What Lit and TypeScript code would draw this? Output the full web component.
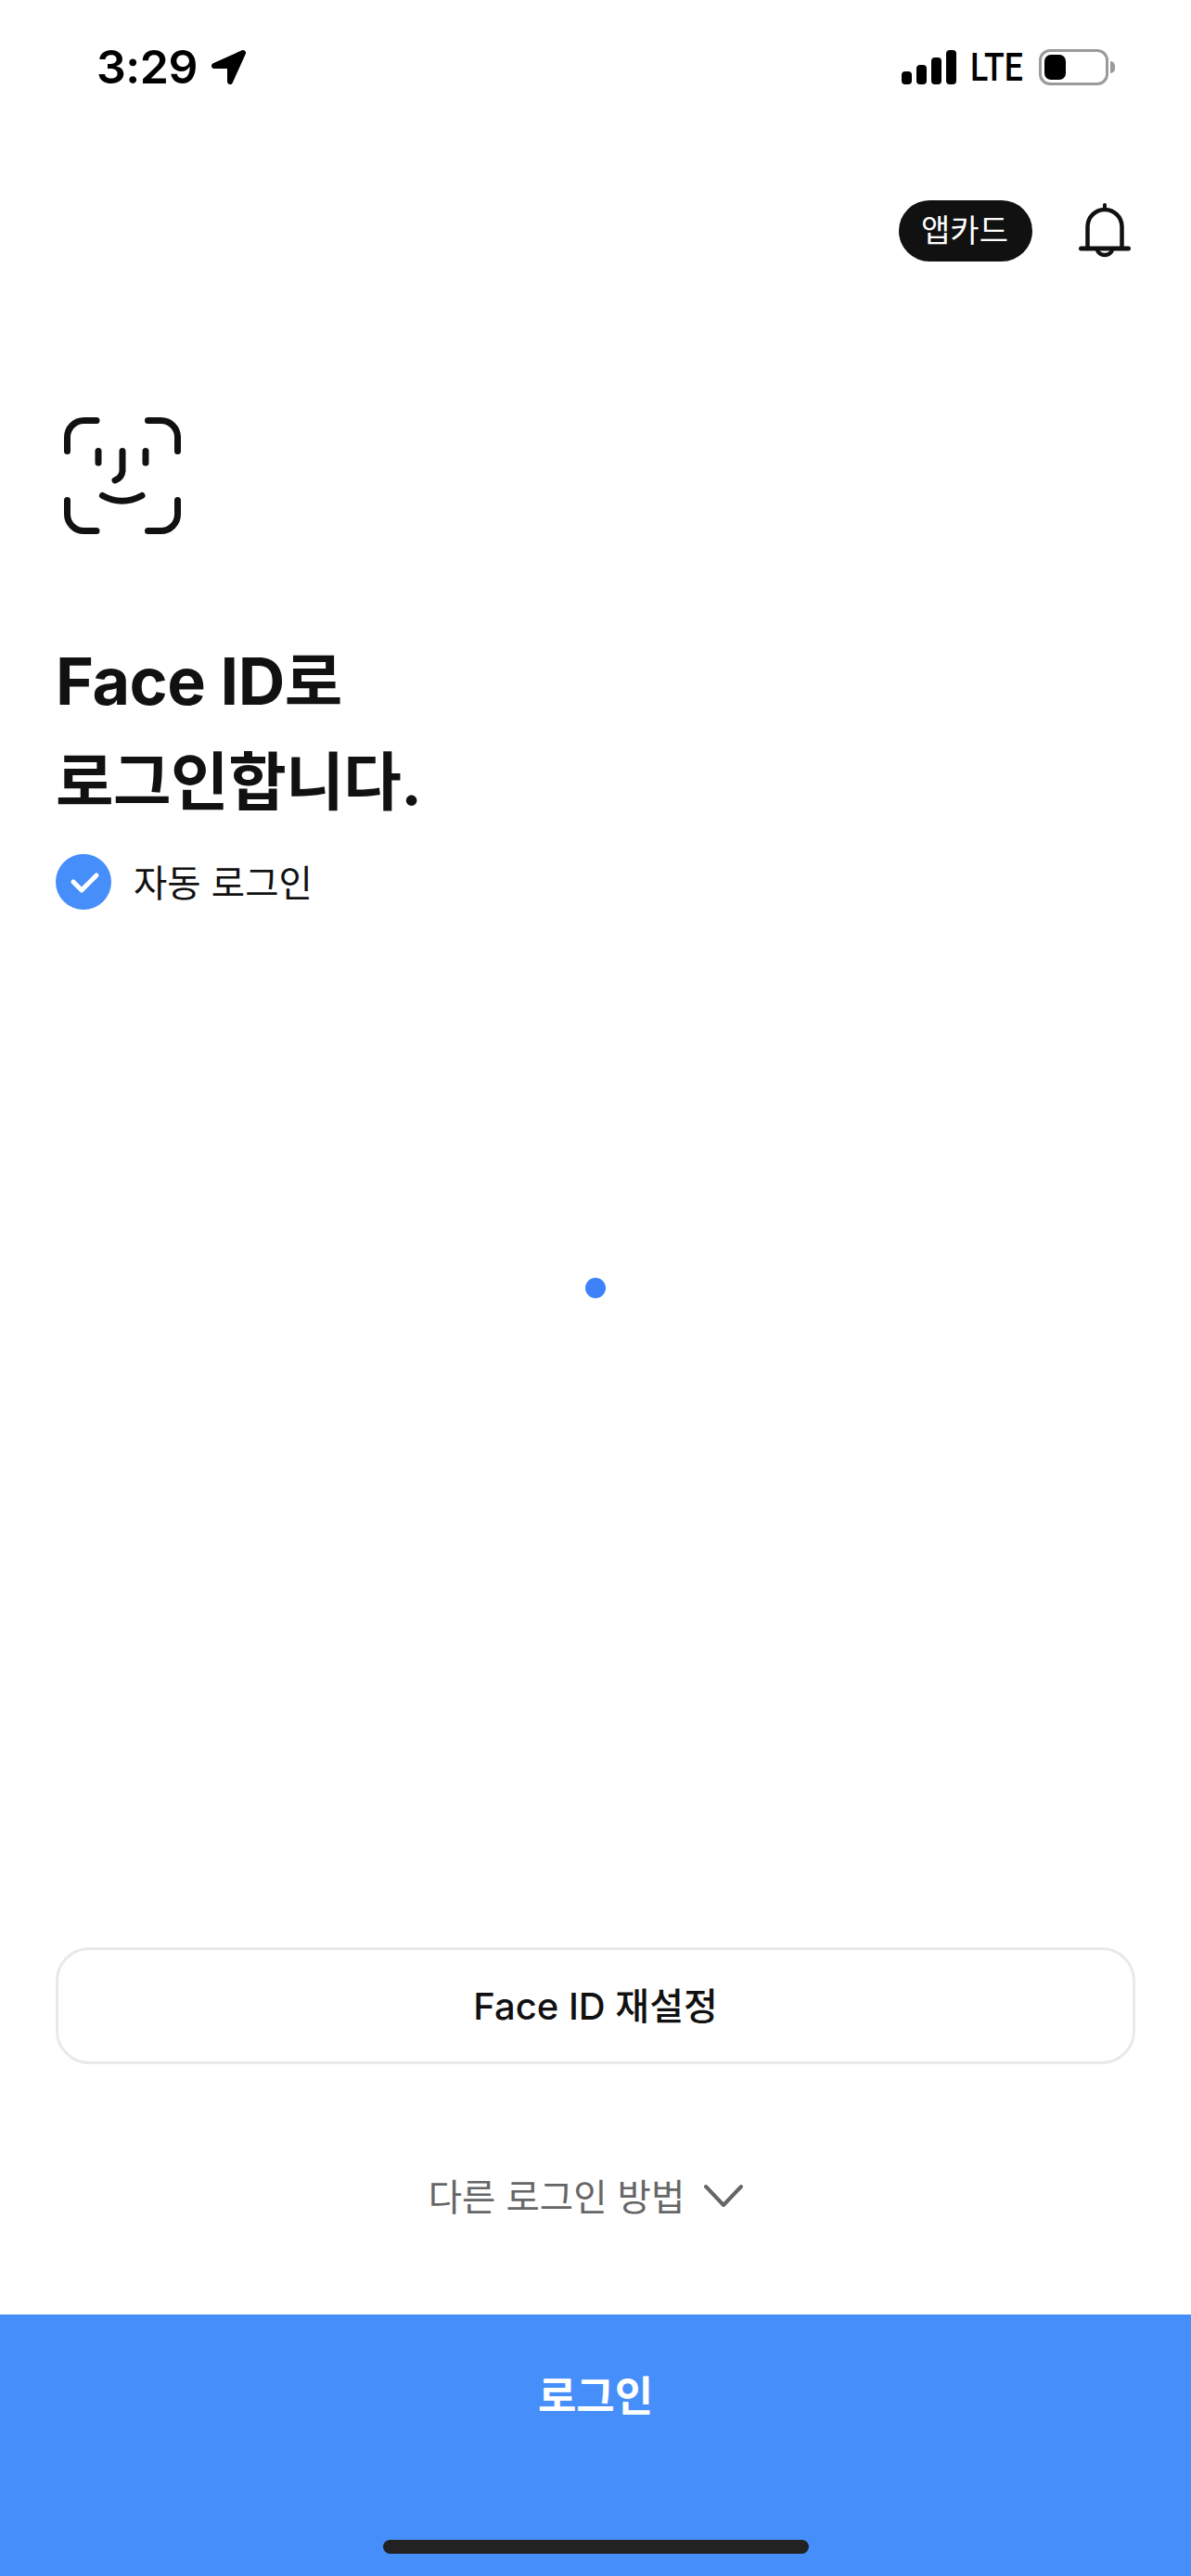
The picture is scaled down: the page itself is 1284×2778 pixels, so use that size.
import { LitElement, css, html } from "lit";
import { customElement } from "lit/decorators.js";

@customElement("app-root")
export class AppRoot extends LitElement {
  render() {
    return html`
      <div class="status">
        <div class="status-left">
          <span class="time">3:29</span>
          <svg class="arrow" width="39" height="39" viewBox="0 0 39 39">
            <path d="M4 18L35 4L21 35V18Z" fill="#000" stroke="#000" stroke-width="6" stroke-linejoin="round" />
          </svg>
        </div>
        <div class="status-right">
          <div class="signal">
            <i style="height:14px"></i>
            <i style="height:21px"></i>
            <i style="height:29px"></i>
            <i style="height:37px"></i>
          </div>
          <span class="lte">LTE</span>
          <div class="battery"><div class="battery-fill"></div></div>
          <div class="battery-nub"></div>
        </div>
      </div>

      <div class="top-actions">
        <span class="pill">앱카드</span>
        <svg class="bell" width="56" height="60" viewBox="0 0 56 60" fill="none" stroke="#111" stroke-linecap="round">
          <path d="M2.5 49H53.5" stroke-width="5" />
          <path d="M9.5 49V25.5a18.5 18.5 0 0 1 37 0V49" stroke-width="4.5" />
          <path d="M28 2V6" stroke-width="4" />
          <path d="M20 50.5a8.2 7 0 0 0 16 0" stroke-width="4.5" />
        </svg>
      </div>

      <main class="content">
        <svg class="face" width="126" height="126" viewBox="0 0 126 126" fill="none" stroke="#111" stroke-width="7" stroke-linecap="round">
          <path d="M3.5 36.5V21.5A18 18 0 0 1 21.5 3.5H35" />
          <path d="M90.5 3.5H104.5A18 18 0 0 1 122.5 21.5V36.5" />
          <path d="M3.5 89.5V104.5A18 18 0 0 0 21.5 122.5H35" />
          <path d="M90.5 122.5H104.5A18 18 0 0 0 122.5 104.5V89.5" />
          <path d="M37 36.5V49" />
          <path d="M88 36.5V49" />
          <path d="M63 36.5V57C63 62 60 66 55 68" />
          <path d="M41.5 84.5Q62.5 96 84 84.5" />
        </svg>
        <h1><span class="latin">Face ID</span>로<br />로그인합니다.</h1>
        <div class="auto">
          <svg width="60" height="60" viewBox="0 0 60 60">
            <circle cx="30" cy="30" r="30" fill="#468ef9" />
            <path d="M19 30L28 39L44 23" fill="none" stroke="#fff" stroke-width="5" stroke-linecap="round" stroke-linejoin="round" />
          </svg>
          <span class="auto-label">자동 로그인</span>
        </div>
        <div class="spinner"><div class="dot"></div></div>
      </main>

      <div class="bottom">
        <button class="reset">Face ID 재설정</button>
        <div class="other">
          <span class="other-label">다른 로그인 방법</span>
          <svg width="44" height="26" viewBox="0 0 44 26" fill="none" stroke="#666" stroke-width="4" stroke-linecap="round" stroke-linejoin="round">
            <path d="M3 3L22 23L41 3" />
          </svg>
        </div>
      </div>

      <footer class="login">
        <span class="login-label">로그인</span>
        <div class="home-bar"></div>
      </footer>
    `;
  }

  static styles = css`
    :host {
      display: flex;
      flex-direction: column;
      width: 1284px;
      height: 2778px;
      background: #fff;
      color: #111;
      font-family: "Inter", "Noto Sans CJK KR", sans-serif;
      overflow: hidden;
    }
    .status {
      display: flex;
      justify-content: space-between;
      align-items: center;
      height: 39px;
      margin-top: 53px;
      padding: 0 82px 0 104px;
    }
    .status-left {
      display: flex;
      align-items: center;
      gap: 14px;
    }
    .time {
      font-size: 50px;
      font-weight: 600;
      letter-spacing: -0.5px;
      line-height: 39px;
      color: #000;
    }
    .status-right {
      display: flex;
      align-items: center;
    }
    .signal {
      display: flex;
      align-items: flex-end;
      gap: 5px;
      height: 37px;
    }
    .signal i {
      display: block;
      width: 11px;
      border-radius: 4px;
      background: #000;
    }
    .lte {
      width: 57px;
      margin-left: 15px;
      font-family: "Roboto", sans-serif;
      font-size: 42px;
      font-weight: 500;
      line-height: 39px;
      color: #000;
      transform: scaleX(0.85);
      transform-origin: left center;
      white-space: nowrap;
    }
    .battery {
      box-sizing: border-box;
      width: 75px;
      height: 39px;
      margin-left: 17px;
      padding: 3px;
      border: 3px solid #9a9a9a;
      border-radius: 12px;
    }
    .battery-fill {
      width: 23px;
      height: 27px;
      border-radius: 7px;
      background: #000;
    }
    .battery-nub {
      width: 5px;
      height: 13px;
      margin-left: 2px;
      border-radius: 0 6px 6px 0;
      background: #9a9a9a;
    }
    .top-actions {
      display: flex;
      justify-content: flex-end;
      align-items: center;
      gap: 50px;
      margin-top: 124px;
      padding-right: 65px;
    }
    .pill {
      display: flex;
      justify-content: center;
      align-items: center;
      box-sizing: border-box;
      width: 144px;
      height: 66px;
      padding: 0 2px 5px 0;
      border-radius: 33px;
      background: #111;
      color: #fff;
      font-size: 34px;
    }
    .content {
      display: flex;
      flex: 1;
      flex-direction: column;
      padding: 0 60px;
    }
    .face {
      margin: 168px 0 0 9px;
    }
    h1 {
      margin: 105px 0 0;
      font-size: 68px;
      font-weight: 700;
      letter-spacing: -0.5px;
      line-height: 108px;
    }
    .latin {
      font-size: 70px;
    }
    .auto {
      display: flex;
      align-items: center;
      gap: 24px;
      margin-top: 24px;
      font-size: 39.5px;
    }
    .auto-label {
      padding-bottom: 3px;
    }
    .spinner {
      display: flex;
      justify-content: center;
      margin-top: 397px;
    }
    .dot {
      width: 22px;
      height: 22px;
      border-radius: 50%;
      background: #3d82fb;
    }
    .bottom {
      display: flex;
      flex-direction: column;
      padding: 0 60px;
    }
    .reset {
      height: 126px;
      padding: 0 0 4px;
      border: 3px solid #e9e9e9;
      border-radius: 36px;
      background: #fff;
      color: #111;
      font: 500 40px "Inter", "Noto Sans CJK KR", sans-serif;
    }
    .other {
      display: flex;
      justify-content: center;
      align-items: center;
      gap: 20px;
      height: 60px;
      margin: 112px 0 98px;
      padding-right: 20px;
      color: #666;
      font-size: 39.5px;
    }
    .other-label {
      padding-bottom: 3px;
    }
    .login {
      display: flex;
      flex-direction: column;
      align-items: center;
      height: 282px;
      background: #468ef9;
    }
    .login-label {
      margin-top: 61px;
      color: #fff;
      font-size: 45px;
      font-weight: 600;
      line-height: 56px;
    }
    .home-bar {
      width: 459px;
      height: 15px;
      margin-top: 126px;
      border-radius: 8px;
      background: #222;
    }
  `;
}
